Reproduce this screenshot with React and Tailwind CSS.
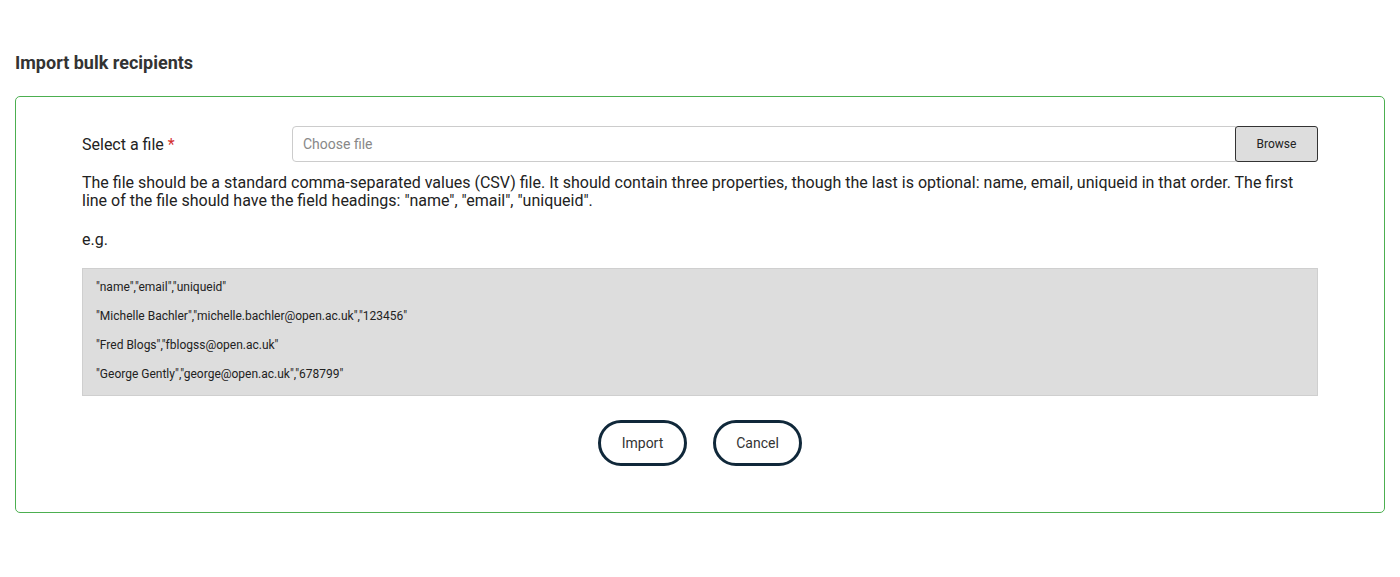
import React from 'react';

const sampleRows = [
    '"name","email","uniqueid"',
    '"Michelle Bachler","michelle.bachler@open.ac.uk","123456"',
    '"Fred Blogs","fblogss@open.ac.uk"',
    '"George Gently","george@open.ac.uk","678799"',
];

const App = () => {
    return (
        <div className="min-h-[577px] bg-white px-[15px] pt-[52px] font-['Roboto',sans-serif] text-[#333]">
            <h1 className="text-[18px] leading-[22px] font-bold mb-[22px]">Import bulk recipients</h1>
            <div className="border border-[#4caf50] rounded-[5px] px-[66px] pt-[29px] pb-[46px]">
                <div className="flex items-center">
                    <label className="w-[210px] pt-[2px] text-[16px] text-[#222]">
                        Select a file <span className="text-[#d32f2f]">*</span>
                    </label>
                    <div className="flex-1 flex">
                        <div className="flex-1 h-[36px] border border-[#ccc] rounded-l-[4px] flex items-center px-[10px] text-[14px] text-[#888]">
                            Choose file
                        </div>
                        <button className="h-[36px] w-[83px] bg-[#dddddd] border border-[#333] rounded-[3px] text-[12px] text-[#222] -ml-px">
                            Browse
                        </button>
                    </div>
                </div>
                <p className="mt-[12px] text-[16px] leading-[18px] text-[#222]">
                    The file should be a standard comma-separated values (CSV) file. It should contain three properties,
                    though the last is optional: name, email, uniqueid in that order. The first line of the file should
                    have the field headings: "name", "email", "uniqueid".
                </p>
                <p className="mt-[21px] text-[16px] leading-[18px] text-[#222]">e.g.</p>
                <div className="mt-[19px] bg-[#dddddd] border border-[#cfcfcf] px-[13px] pt-[10px] pb-[12px] flex flex-col gap-[12px]">
                    {sampleRows.map((row, index) => (
                        <p key={index} className="text-[12px] leading-[17px] text-[#222]">
                            {row}
                        </p>
                    ))}
                </div>
                <div className="mt-[24px] flex justify-center gap-[26px]">
                    <button className="h-[46px] w-[89px] rounded-full border-[3px] border-[#10283a] text-[14px] text-[#333]">
                        Import
                    </button>
                    <button className="h-[46px] w-[89px] rounded-full border-[3px] border-[#10283a] text-[14px] text-[#333]">
                        Cancel
                    </button>
                </div>
            </div>
        </div>
    );
};

export default App;
